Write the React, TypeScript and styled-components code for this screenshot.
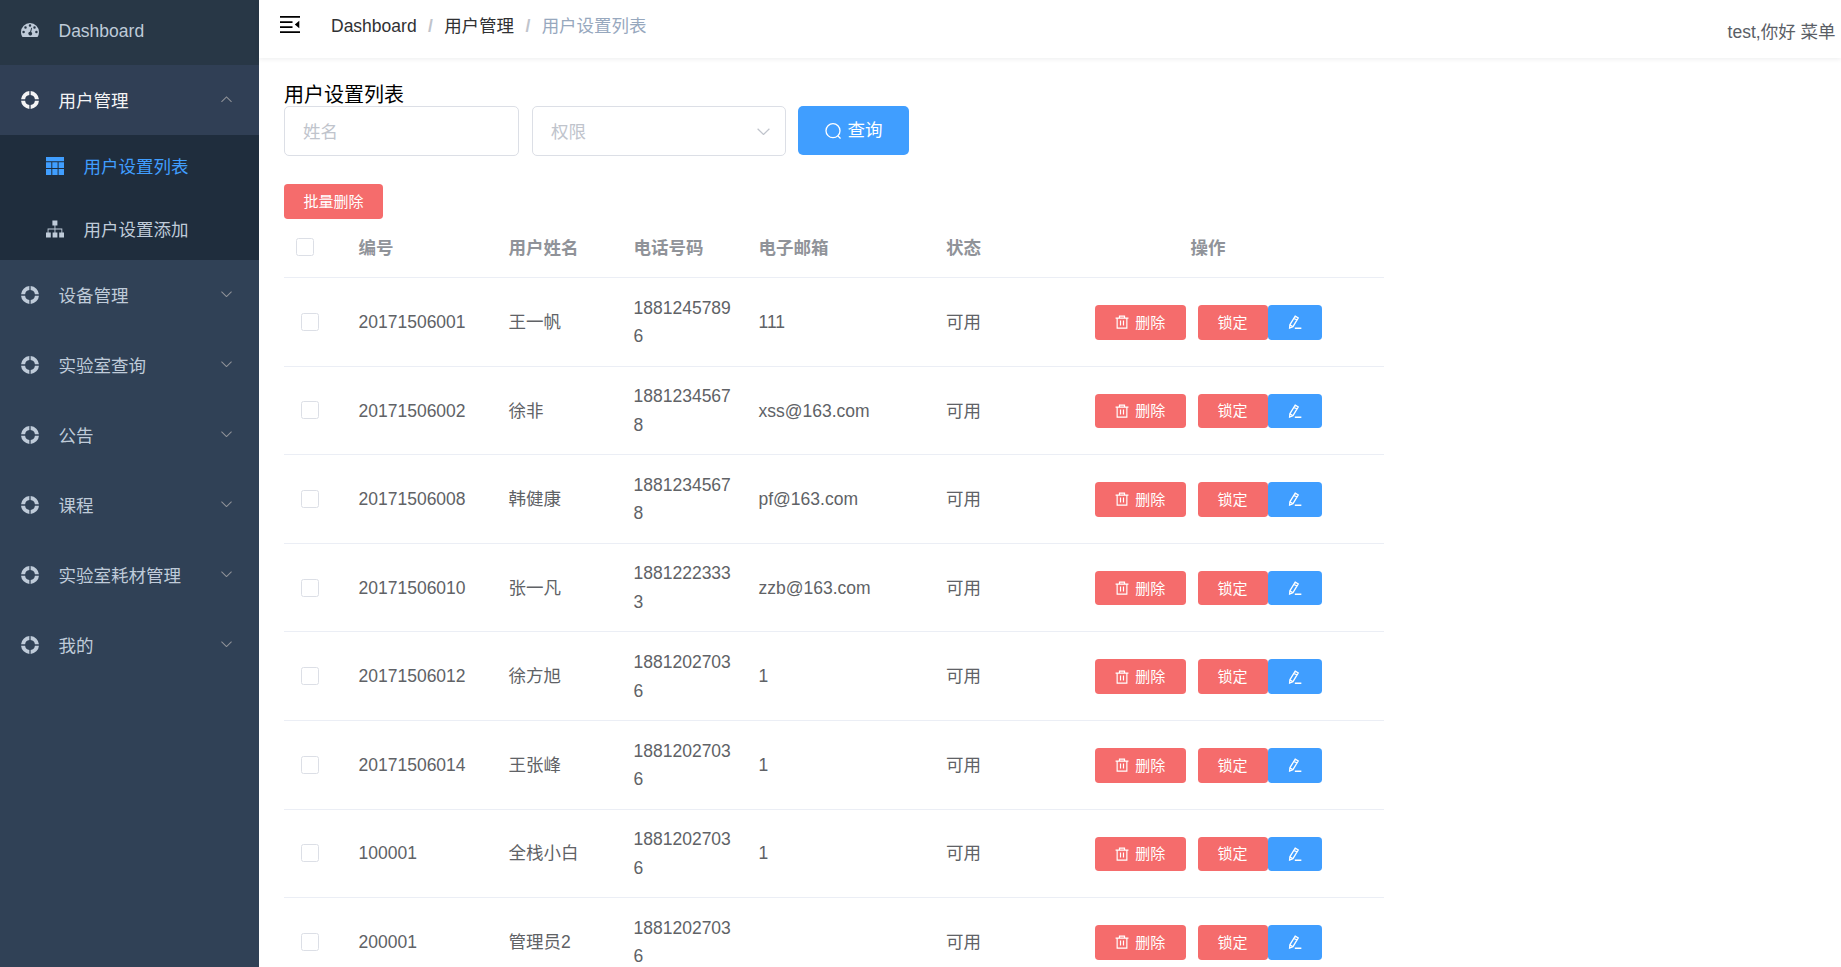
import React from "react";
import styled, { createGlobalStyle, css } from "styled-components";

const GlobalStyle = createGlobalStyle`
  *, *::before, *::after { box-sizing: border-box; }
  html, body { margin: 0; height: 100%; overflow: hidden; background: #fff; }
  body {
    font-family: "Liberation Sans", "Noto Sans CJK SC", sans-serif;
    font-size: 17.5px;
    color: #606266;
  }
`;

const Shell = styled.div`
  display: flex;
  height: 967px;
  overflow: hidden;
`;

const Sidebar = styled.nav`
  flex: 0 0 259px;
  background: #304156;
`;

type Tone = "top" | "open" | "plain";

const MenuRow = styled.div<{ $tone?: Tone }>`
  display: flex;
  align-items: center;
  height: ${(p) => (p.$tone === "top" ? 65 : 70)}px;
  padding: 0 27px ${(p) => (p.$tone === "top" ? 6 : 0)}px 21px;
  color: ${(p) => (p.$tone === "open" ? "#f4f4f5" : "#bfcbd9")};
  background: ${(p) =>
    p.$tone === "top" ? "#283746" : p.$tone === "open" ? "#303f55" : "transparent"};
`;

const SubMenu = styled.div`
  background: #1f2d3d;
`;

const SubRow = styled.div<{ $active?: boolean }>`
  display: flex;
  align-items: center;
  height: 62.5px;
  padding-left: 46px;
  color: ${(p) => (p.$active ? "#409eff" : "#bfcbd9")};
`;

const MenuIcon = styled.svg`
  flex: none;
  display: block;
  width: 18px;
  height: 18px;
  margin-right: 19.5px;
  fill: currentColor;
`;

const MenuLabel = styled.span`
  flex: 1;
  line-height: 26px;
  padding-top: 2px;
`;

const Chevron = styled.svg<{ $up?: boolean; $size?: number }>`
  flex: none;
  display: block;
  width: ${(p) => p.$size ?? 11}px;
  height: ${(p) => (p.$size ?? 11) / 2 + 1}px;
  margin-bottom: ${(p) => (p.$size ? 0 : 2)}px;
  fill: none;
  stroke: ${(p) => (p.$size ? "#c0c4cc" : "#909399")};
  stroke-width: 1.1;
  ${(p) => p.$up && css`transform: rotate(180deg);`}
`;

const Main = styled.div`
  flex: 1;
  min-width: 0;
  display: flex;
  flex-direction: column;
`;

const TopBar = styled.header`
  flex: none;
  display: flex;
  align-items: flex-start;
  height: 58px;
  padding: 0 5.5px 0 21px;
  box-shadow: 0 1px 5px rgba(0, 21, 41, 0.08);
`;

const Fold = styled.svg`
  display: block;
  width: 20px;
  height: 18px;
  margin: 16px 31px 0 0;
  fill: #000;
`;

const Crumbs = styled.div`
  display: flex;
  flex: 1;
  line-height: 26px;
  padding-top: 13px;
  color: #303133;
`;

const Slash = styled.span`
  width: 5px;
  margin: 0 11.25px;
  font-weight: 700;
  color: #c0c4cc;
`;

const CurrentCrumb = styled.span`
  color: #97a8be;
`;

const UserInfo = styled.div`
  line-height: 26px;
  padding-top: 19px;
  color: #5a5e66;
`;

const Page = styled.main`
  padding: 25px 0 0 25px;
`;

const Title = styled.div`
  height: 23px;
  line-height: 25px;
  font-size: 20px;
  color: #000;
`;

const Filters = styled.div`
  display: flex;
  height: 78px;
  align-items: flex-start;
`;

const Field = styled.div<{ $width: number }>`
  display: flex;
  align-items: center;
  justify-content: space-between;
  width: ${(p) => p.$width}px;
  height: 50px;
  margin-right: 13px;
  padding: 1px 15px 0 18px;
  border: 1px solid #dcdfe6;
  border-radius: 5px;
  color: #c0c4cc;
  line-height: 26px;
`;

const Button = styled.button<{ $kind: "primary" | "danger"; $large?: boolean }>`
  display: inline-flex;
  align-items: center;
  justify-content: center;
  height: ${(p) => (p.$large ? 49 : 34.5)}px;
  padding: 0;
  border: 0;
  border-radius: ${(p) => (p.$large ? 5 : 3.75)}px;
  background: ${(p) => (p.$kind === "primary" ? "#409eff" : "#f56c6c")};
  color: #fff;
  font: inherit;
  font-size: ${(p) => (p.$large ? 17.5 : 15)}px;
  line-height: 1;
  white-space: nowrap;
`;

const SearchButton = styled(Button)`
  width: 111px;
  margin-left: -1px;
  gap: 7px;
`;

const BatchButton = styled(Button)`
  width: 99px;
  height: 35px;
`;

const DeleteButton = styled(Button)`
  width: 91px;
  margin-right: 12px;
  gap: 6.5px;
`;

const LockButton = styled(Button)`
  width: 70px;
`;

const EditButton = styled(Button)`
  width: 54px;
`;

const LineIcon = styled.svg<{ $size: number }>`
  display: block;
  flex: none;
  width: ${(p) => p.$size}px;
  height: ${(p) => p.$size}px;
  fill: none;
  stroke: currentColor;
`;

const Table = styled.div`
  width: 1100px;
`;

const Row = styled.div<{ $head?: boolean }>`
  display: grid;
  grid-template-columns: 62px 150px 125px 125px 187.5px 100px 349.5px;
  align-items: center;
  height: ${(p) => (p.$head ? 59 : 88.6)}px;
  border-bottom: 1px solid #ebeef5;
  ${(p) => p.$head && css`color: #909399; font-weight: 700;`}
`;

const Cell = styled.div<{ $center?: boolean }>`
  padding: 1px 12px 0 ${(p) => (p.$center ? 11.5 : 12.5)}px;
  line-height: 28.75px;
  word-break: break-all;
  ${(p) => p.$center && css`display: flex; justify-content: center;`}
`;

const CheckCell = styled.div<{ $head?: boolean }>`
  padding-left: ${(p) => (p.$head ? 12 : 17)}px;
  padding-bottom: ${(p) => (p.$head ? 2 : 0)}px;
`;

const CheckBox = styled.span`
  display: block;
  width: 18px;
  height: 18px;
  border: 1px solid #dcdfe6;
  border-radius: 2.5px;
  background: #fff;
`;

const DashboardIcon = () => (
  <MenuIcon viewBox="0 0 18 18">
    <path
      fillRule="evenodd"
      d="M9 2a9 9 0 0 0-9 9c0 1.700.4 3.300 1.300 4.700.2.200.4.300.6.300h14.200c.2 0 .4-.1.600-.3A8.700 8.700 0 0 0 18 11a9 9 0 0 0-9-9z
      M2.600 9.700a1.250 1.250 0 1 1 0 2.500a1.250 1.250 0 1 1 0-2.500z
      M4.500 5.200a1.250 1.250 0 1 1 0 2.500a1.250 1.250 0 1 1 0-2.500z
      M9 3.200a1.250 1.250 0 1 1 0 2.500a1.250 1.250 0 1 1 0-2.500z
      M13.500 5.200a1.250 1.250 0 1 1 0 2.500a1.250 1.250 0 1 1 0-2.500z
      M15.400 9.700a1.250 1.250 0 1 1 0 2.500a1.250 1.250 0 1 1 0-2.500z
      M10.300 6.700l.8.200-1 4a1.900 1.900 0 1 1-1-.2z"
    />
  </MenuIcon>
);

const RingIcon = () => (
  <MenuIcon viewBox="0 0 18 18">
    <path d="M8.350 0.050A9 9 0 0 0 .05 8.350H4.100A5 5 0 0 1 8.350 4.100zM9.650 0.050A9 9 0 0 1 17.950 8.350H13.900A5 5 0 0 0 9.650 4.100zM.05 9.650A9 9 0 0 0 8.350 17.950V13.900A5 5 0 0 1 4.100 9.650zM17.950 9.650A9 9 0 0 1 9.650 17.950V13.900A5 5 0 0 0 13.900 9.650z" />
  </MenuIcon>
);

const TableIcon = () => (
  <MenuIcon viewBox="0 0 18 18">
    <path d="M0 0h18v4.200H0zM0 5.200h5.300v5.700H0zM6.300 5.200h5.300v5.700H6.300zM12.600 5.200H18v5.700h-5.400zM0 12h5.300v6H0zM6.300 12h5.300v6H6.300zM12.600 12H18v6h-5.400z" />
  </MenuIcon>
);

const TreeIcon = () => (
  <MenuIcon viewBox="0 0 18 18">
    <path d="M6.400.5h5v5h-5zM8.500 5.500h.9v3h6.900v4H18v5h-4.800v-5h2.200V9.400h-6v3.100h2v5H6.600v-5h1.900V9.400h-6v3.100h2.300v5H0v-5h1.600v-4h6.900z" />
  </MenuIcon>
);

const Arrow = ({ up, size }: { up?: boolean; size?: number }) => (
  <Chevron $up={up} $size={size} viewBox="0 0 12 7">
    <path d="M.5.7 6 6.100 11.500.7" />
  </Chevron>
);

const SearchIcon = () => (
  <LineIcon $size={16} viewBox="0 0 16 16" strokeWidth="1.300">
    <circle cx="8" cy="7.700" r="7" />
    <path d="m12.700 12.700 2.900 2.700" />
  </LineIcon>
);

const TrashIcon = () => (
  <LineIcon $size={14} viewBox="0 0 15 15" strokeWidth="1.250">
    <path d="M.6 3.400h13.800M4.800 3.400V1.200h5.400v2.200M2.300 3.400v10.700h10.400V3.400M5.900 6v5.200M9.100 6v5.200" />
  </LineIcon>
);

const EditIcon = () => (
  <LineIcon $size={14} viewBox="0 0 15 15" strokeWidth="1.350">
    <path d="M7.700 1.200 11 3.100 5.300 12.500 1.700 14 2 10.500zM6.400 3.500l3.200 1.900M2 10.500l3.300 2M7.300 14.200h7" />
  </LineIcon>
);

const groups = ["设备管理", "实验室查询", "公告", "课程", "实验室耗材管理", "我的"];

const users = [
  { id: "20171506001", name: "王一帆", phone: "18812457896", email: "111" },
  { id: "20171506002", name: "徐非", phone: "18812345678", email: "xss@163.com" },
  { id: "20171506008", name: "韩健康", phone: "18812345678", email: "pf@163.com" },
  { id: "20171506010", name: "张一凡", phone: "18812223333", email: "zzb@163.com" },
  { id: "20171506012", name: "徐方旭", phone: "18812027036", email: "1" },
  { id: "20171506014", name: "王张峰", phone: "18812027036", email: "1" },
  { id: "100001", name: "全栈小白", phone: "18812027036", email: "1" },
  { id: "200001", name: "管理员2", phone: "18812027036", email: "" },
];

export default function App() {
  return (
    <>
      <GlobalStyle />
      <Shell>
        <Sidebar>
          <MenuRow $tone="top">
            <DashboardIcon />
            <MenuLabel>Dashboard</MenuLabel>
          </MenuRow>
          <MenuRow $tone="open">
            <RingIcon />
            <MenuLabel>用户管理</MenuLabel>
            <Arrow up />
          </MenuRow>
          <SubMenu>
            <SubRow $active>
              <TableIcon />
              <MenuLabel>用户设置列表</MenuLabel>
            </SubRow>
            <SubRow>
              <TreeIcon />
              <MenuLabel>用户设置添加</MenuLabel>
            </SubRow>
          </SubMenu>
          {groups.map((label) => (
            <MenuRow key={label}>
              <RingIcon />
              <MenuLabel>{label}</MenuLabel>
              <Arrow />
            </MenuRow>
          ))}
        </Sidebar>
        <Main>
          <TopBar>
            <Fold viewBox="0 0 20 18">
              <path d="M0 0h20v1.800H0zM0 5.200h12.500V7H0zM0 10.200h12.500V12H0zM0 15.200h20V17H0zM19.300 4.800v7.400L14.800 8.500z" />
            </Fold>
            <Crumbs>
              <span>Dashboard</span>
              <Slash>/</Slash>
              <span>用户管理</span>
              <Slash>/</Slash>
              <CurrentCrumb>用户设置列表</CurrentCrumb>
            </Crumbs>
            <UserInfo>test,你好 菜单</UserInfo>
          </TopBar>
          <Page>
            <Title>用户设置列表</Title>
            <Filters>
              <Field $width={235}>姓名</Field>
              <Field $width={254}>
                权限
                <Arrow size={13} />
              </Field>
              <SearchButton $kind="primary" $large>
                <SearchIcon />
                查询
              </SearchButton>
            </Filters>
            <BatchButton $kind="danger">批量删除</BatchButton>
            <Table>
              <Row $head>
                <CheckCell $head>
                  <CheckBox />
                </CheckCell>
                <Cell>编号</Cell>
                <Cell>用户姓名</Cell>
                <Cell>电话号码</Cell>
                <Cell>电子邮箱</Cell>
                <Cell>状态</Cell>
                <Cell $center>操作</Cell>
              </Row>
              {users.map((u) => (
                <Row key={u.id}>
                  <CheckCell>
                    <CheckBox />
                  </CheckCell>
                  <Cell>{u.id}</Cell>
                  <Cell>{u.name}</Cell>
                  <Cell>{u.phone}</Cell>
                  <Cell>{u.email}</Cell>
                  <Cell>可用</Cell>
                  <Cell $center>
                    <DeleteButton $kind="danger">
                      <TrashIcon />
                      删除
                    </DeleteButton>
                    <LockButton $kind="danger">锁定</LockButton>
                    <EditButton $kind="primary">
                      <EditIcon />
                    </EditButton>
                  </Cell>
                </Row>
              ))}
            </Table>
          </Page>
        </Main>
      </Shell>
    </>
  );
}
